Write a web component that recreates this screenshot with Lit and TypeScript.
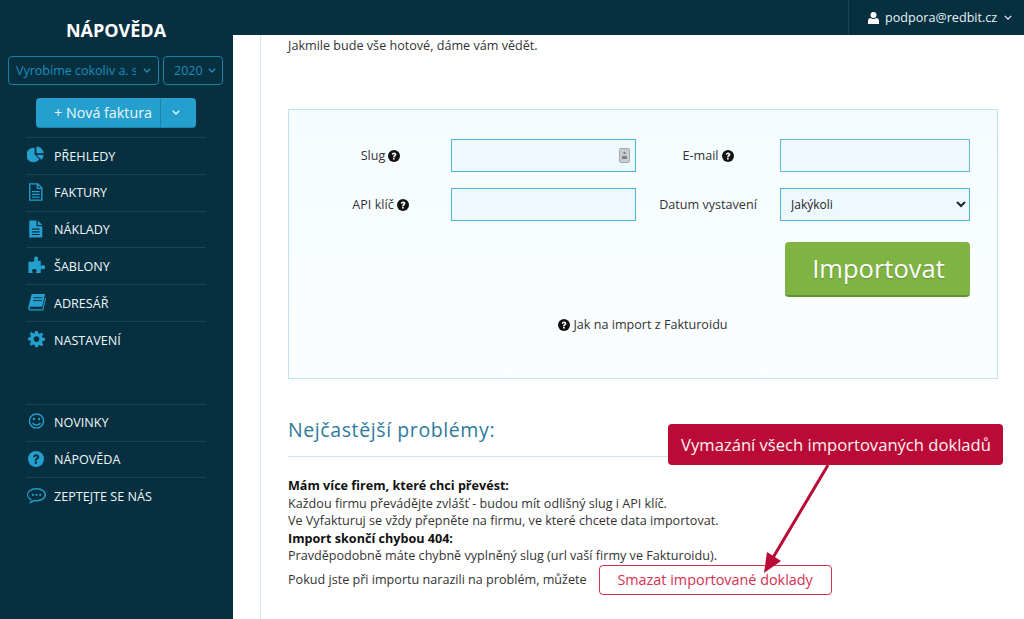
import { LitElement, html, css, svg } from "lit";
import { customElement } from "lit/decorators.js";

const chev = (c: string, w = 10) => html`<svg width=${w} height=${w * 0.6} viewBox="0 0 10 6" fill="none" stroke=${c} stroke-width="1.6"><path d="M1 1l4 4 4-4"/></svg>`;
const help = (size: number, fg: string, bg: string) => html`<svg width=${size} height=${size} viewBox="0 0 16 16"><circle cx="8" cy="8" r="8" fill=${bg}/><path d="M5 6.200C5.200 4.400 6.500 3.300 8.100 3.300c1.800 0 3.100 1.100 3.100 2.700 0 1.300-.9 1.900-1.600 2.400-.5.400-.7.700-.7 1.300H6.700c0-1.300.5-1.900 1.200-2.400.5-.4.900-.7.900-1.200 0-.5-.4-.9-1-.9-.6 0-1 .4-1.100 1z" fill=${fg}/><rect x="6.700" y="10.500" width="2.200" height="2.200" fill=${fg}/></svg>`;

const blue = "#259fcd";
const icons: Record<string, [number, unknown]> = {
  pie: [18, svg`<path d="M8 2.200V9.500l5.200 5.200A8 8 0 1 1 8 2.200z"/><path d="M10 .5a8 8 0 0 1 8 7.500h-8z"/><path d="M10 10h8a8 8 0 0 1-2.600 5.400z"/>`],
  fileo: [18, svg`<path fill="none" stroke-width="1.500" stroke=${blue} d="M2.500 1h9l4.500 4.500V19h-13.500z"/><path d="M11 1v5h5" fill="none" stroke=${blue} stroke-width="1.500"/><path d="M5 9h8.500v1.300H5zM5 12h8.500v1.300H5zM5 15h8.500v1.300H5z"/>`],
  file: [18, svg`<path fill-rule="evenodd" d="M2 .5h8V7h6.500v12.500H2zM5 9.500v1.300h8.500V9.500zM5 12.500v1.300h8.500v-1.300zM5 15.500v1.300h8.500v-1.300z"/><path d="M11.500.5l5 5h-5z"/>`],
  puzzle: [19, svg`<path d="M7 2.500c0-1.300 1-2 2.200-2s2 .8 2 2c0 .9-.6 1.300-.6 2 0 .4.300.6 1 .6H14v4.600c0 .5.400.7.800.5.500-.3.900-.7 1.700-.7 1.200 0 2 .9 2 2.300s-.8 2.300-2 2.300c-.8 0-1.200-.4-1.700-.7-.4-.2-.8 0-.8.500V18H9.500c-.5 0-.8-.3-.6-.8.200-.5.700-.9.700-1.600 0-1.100-.9-1.800-2.400-1.800s-2.400.7-2.400 1.800c0 .7.500 1.100.7 1.600.2.500-.1.800-.6.800H1V6h5c.8 0 1.200-.3 1.200-.8 0-.9-.2-1.300-.2-2.700z"/>`],
  book: [19, svg`<path d="M4.500 1H18.500l-3 13.500H3.500c-.9 0-1.200.5-1.200 1.100 0 .8.600 1.400 1.500 1.400h12l2.800-12 1 .6-3 12.900H3.500C1.700 18.500.500 17 .8 15.200z"/><path d="M6.500 5h9M6 8h9" stroke="#06303f" stroke-width="1"/>`],
  cog: [17, svg`<path fill-rule="evenodd" d="M8 0h3l.5 2.700 1.700.7L15.500 1.800l2 2-1.500 2.300.7 1.700 2.800.5v3l-2.800.5-.7 1.700 1.500 2.300-2 2-2.300-1.500-1.700.7L11 19H8l-.5-2.500-1.700-.7-2.300 1.500-2-2L3 13l-.7-1.700L-.500 10.800v-3L2.300 7.300 3 5.600 1.500 3.300l2-2 2.300 1.500 1.700-.7zM9.500 6.200a3.300 3.300 0 1 0 0 6.600 3.300 3.300 0 0 0 0-6.600z"/>`],
  smile: [17, svg`<circle cx="9.500" cy="9.500" r="8.300" fill="none" stroke=${blue} stroke-width="1.700"/><circle cx="6.500" cy="7" r="1.400"/><circle cx="12.500" cy="7" r="1.400"/><path d="M5 11.500c2 3.500 7 3.500 9 0" fill="none" stroke=${blue} stroke-width="1.700"/>`],
  chat: [20, svg`<path fill-rule="evenodd" d="M10 2C4.500 2 .500 5 .500 8.800c0 2.300 1.500 4.200 3.700 5.400-.2 1.200-1 2.300-2 3.300 2 0 4.100-1 5.500-2.200.8.100 1.500.2 2.300.2 5.500 0 9.500-3 9.500-6.700S15.500 2 10 2zm0 1.500c4.700 0 8 2.400 8 5.300s-3.300 5.200-8 5.200c-.9 0-1.700-.1-2.700-.3-.9.900-1.900 1.500-2.900 1.800.4-.7.700-1.500.7-2.400-2.300-.9-3.600-2.500-3.600-4.300 0-2.900 3.800-5.300 8.500-5.300z"/><circle cx="6.300" cy="8.800" r="1.100"/><circle cx="10" cy="8.800" r="1.100"/><circle cx="13.700" cy="8.800" r="1.100"/>`],
};

const navTop: [string, string][] = [["pie", "PŘEHLEDY"], ["fileo", "FAKTURY"], ["file", "NÁKLADY"], ["puzzle", "ŠABLONY"], ["book", "ADRESÁŘ"], ["cog", "NASTAVENÍ"]];
const navBottom: [string, string][] = [["smile", "NOVINKY"], ["help", "NÁPOVĚDA"], ["chat", "ZEPTEJTE SE NÁS"]];

@customElement("app-root")
export class AppRoot extends LitElement {
  static styles = css`
    :host { display: block; width: 1024px; height: 619px; overflow: hidden; position: relative; font-family: "Open Sans", sans-serif; font-size: 12.600px; color: #333; background: #fff; }
    * { box-sizing: border-box; }
    .app { display: grid; grid-template-columns: 233px 1fr; height: 619px; }
    .side { background: #062f40; color: #eef7fa; display: flex; flex-direction: column; }
    .title { height: 56px; padding-top: 17px; padding-right: 1px; text-align: center; font-weight: 700; font-size: 18px; line-height: 26px; color: #fff; }
    .pickers { display: flex; gap: 4px; padding-left: 8px; }
    .pick { height: 29px; border: 1px solid #1b7fa8; border-radius: 4px; color: #1f8dbb; display: flex; align-items: center; font-size: 12.500px; white-space: nowrap; overflow: hidden; }
    .pick.firm { width: 151px; padding-left: 7px; }
    .pick.firm span { width: 120px; overflow: hidden; flex: none; }
    .pick.year { width: 60px; padding-left: 10px; gap: 5px; }
    .pick.firm svg { margin-left: 7px; flex: none; }
    .newbtn { margin: 13px 0 0 36px; width: 160px; height: 30px; background: #259fcd; border-radius: 4px; border-bottom: 1px solid #1c86ae; display: flex; color: #eef9fc; font-size: 14.300px; }
    .newbtn .main { width: 125px; text-align: center; line-height: 29px; padding-left: 10px; border-right: 1px solid #1a84ac; white-space: nowrap; }
    .newbtn .caret { flex: 1; display: flex; align-items: center; justify-content: center; padding-right: 5px; }
    nav { margin: 9px 0 0 26px; width: 180px; }
    nav.low { margin-top: 46px; }
    .row { height: 36.800px; border-top: 1px solid #1c4352; padding-top: .6px; display: flex; align-items: center; color: #eef7fa; }
    .ico { width: 28px; display: flex; }
    .ibox { width: 20px; display: flex; justify-content: center; margin-top: -2px; }
    .ibox svg { fill: #259fcd; display: block; }

    .main-col { display: flex; flex-direction: column; min-width: 0; }
    .top { height: 35px; background: #062f40; display: flex; justify-content: flex-end; flex: none; }
    .user { width: 176px; border-left: 1px solid #1c4352; display: flex; align-items: center; padding-left: 19px; color: #e6f2f6; font-size: 12.600px; white-space: nowrap; }
    .user svg.u { margin-right: 6px; }
    .user svg.c { margin-left: 7px; }
    .content { flex: 1; margin-left: 27px; border-left: 1px solid #cfe7f1; padding: 2px 26px 0 27px; }
    .lead { line-height: 17.500px; height: 72px; }
    .panel { height: 270px; border: 1px solid #bfe2ee; background: linear-gradient(#f5fcff, #fbfeff); padding: 29px 27px 0 21px; }
    .grid { display: grid; grid-template-columns: 141px 185px 144px 190px; grid-template-rows: 33px 33px; row-gap: 16px; }
    .lab { display: flex; align-items: center; justify-content: center; gap: 3px; color: #333; }
    .field { border: 1px solid #4db4d8; background: #edf9fe; position: relative; display: flex; align-items: center; }
    .field.soft { border-color: #62bbda; }
    .key { position: absolute; right: 5px; top: 8px; }
    select { width: 100%; height: 100%; border: 1px solid #4db4d8; background: #edf9fe; font-family: inherit; font-size: 12px; color: #222; padding-left: 6px; border-radius: 0; }
    .actions { display: flex; justify-content: flex-end; margin-top: 21px; }
    .imp { width: 185px; height: 55px; background: #7fb344; border-bottom: 2px solid #64912f; border-radius: 4px; color: #fff; font-size: 25.500px; padding: 0 0 2px 2px; display: flex; align-items: center; justify-content: center; text-shadow: 0 1px 1px rgba(0,0,0,.2); }
    .how { display: flex; justify-content: center; align-items: center; gap: 3px; margin: 19px 0 0 6px; }
    h2 { margin: 37px 0 0; height: 41px; font-weight: 400; font-size: 19.500px; line-height: 27px; letter-spacing: .6px; color: #2d7a9c; border-bottom: 1px solid #cfe4ee; }
    .faq { margin-top: 20px; line-height: 17.500px; }
    .faq b { color: #111; font-weight: 700; }
    .faq div { white-space: nowrap; }
    .last { display: flex; align-items: center; }
    .del { margin-left: 12px; width: 233px; height: 30px; border: 1px solid #d7304f; border-radius: 4px; background: #fff; color: #d7304f; font-size: 14.400px; display: flex; align-items: center; justify-content: center; }

    .callout { position: absolute; left: 668px; top: 424px; width: 335px; height: 41px; padding-left: 1px; background: #b90b35; border-radius: 4px; color: #fdf2f4; font-size: 16.600px; display: flex; align-items: center; justify-content: center; white-space: nowrap; }
    .arrow { position: absolute; left: 750px; top: 460px; pointer-events: none; }
  `;

  private item = ([k, label]: [string, string]) => {
    const ic = icons[k];
    return html`<div class="row"><span class="ico"><span class="ibox">${k === "help" ? help(16, "#062f40", blue) : html`<svg width=${ic[0]} height=${ic[0]} viewBox="-.5 0 20 20">${ic[1]}</svg>`}</span></span>${label}</div>`;
  };

  render() {
    return html`
      <div class="app">
        <aside class="side">
          <div class="title">NÁPOVĚDA</div>
          <div class="pickers">
            <div class="pick firm"><span>Vyrobíme cokoliv a. s.</span>${chev("#1f8dbb", 8)}</div>
            <div class="pick year"><span>2020</span>${chev("#1f8dbb", 8)}</div>
          </div>
          <div class="newbtn"><div class="main">+ Nová faktura</div><div class="caret">${chev("#eef9fc", 8)}</div></div>
          <nav>${navTop.map(this.item)}</nav>
          <nav class="low">${navBottom.map(this.item)}</nav>
        </aside>
        <div class="main-col">
          <div class="top">
            <div class="user">
              <svg class="u" width="11" height="12" viewBox="0 0 11 12" fill="#fff"><circle cx="5.500" cy="3" r="3"/><path d="M0 12V9c0-2 1.300-3 2.500-3 .8.600 1.800 1 3 1s2.200-.4 3-1C9.700 6 11 7 11 9v3z"/></svg>
              podpora@redbit.cz
              <svg class="c" width="8" height="5" viewBox="0 0 10 6" fill="none" stroke="#e6f2f6" stroke-width="1.600"><path d="M1 1l4 4 4-4"/></svg>
            </div>
          </div>
          <div class="content">
            <div class="lead">Jakmile bude vše hotové, dáme vám vědět.</div>
            <section class="panel">
              <div class="grid">
                <div class="lab">Slug ${help(12, "#fff", "#111")}</div>
                <div class="field"><svg class="key" width="11" height="15" viewBox="0 0 11 15"><rect x=".5" y=".5" width="10" height="14" rx="1.500" fill="#c9cdd0" stroke="#a4a8ab"/><circle cx="5.500" cy="5" r="1.200" fill="#7d8184"/><rect x="3" y="8" width="5" height="3" fill="#7d8184"/></svg></div>
                <div class="lab">E-mail ${help(12, "#fff", "#111")}</div>
                <div class="field soft"></div>
                <div class="lab">API klíč ${help(12, "#fff", "#111")}</div>
                <div class="field"></div>
                <div class="lab">Datum vystavení</div>
                <select><option>Jakýkoli</option></select>
              </div>
              <div class="actions"><div class="imp">Importovat</div></div>
              <div class="how">${help(12, "#fff", "#111")} Jak na import z Fakturoidu</div>
            </section>
            <h2>Nejčastější problémy:</h2>
            <div class="faq">
              <div><b>Mám více firem, které chci převést:</b></div>
              <div>Každou firmu převádějte zvlášť - budou mít odlišný slug i API klíč.</div>
              <div>Ve Vyfakturuj se vždy přepněte na firmu, ve které chcete data importovat.</div>
              <div><b>Import skončí chybou 404:</b></div>
              <div>Pravděpodobně máte chybně vyplněný slug (url vaší firmy ve Fakturoidu).</div>
              <div class="last">Pokud jste při importu narazili na problém, můžete<span class="del">Smazat importované doklady</span></div>
            </div>
          </div>
        </div>
      </div>
      <div class="callout">Vymazání všech importovaných dokladů</div>
      <svg class="arrow" width="90" height="120" viewBox="750 460 90 120"><path d="M828 465L771 561" stroke="#b90b35" stroke-width="3" fill="none"/><path d="M764 573l3-21 14 9z" fill="#b90b35"/></svg>
    `;
  }
}
